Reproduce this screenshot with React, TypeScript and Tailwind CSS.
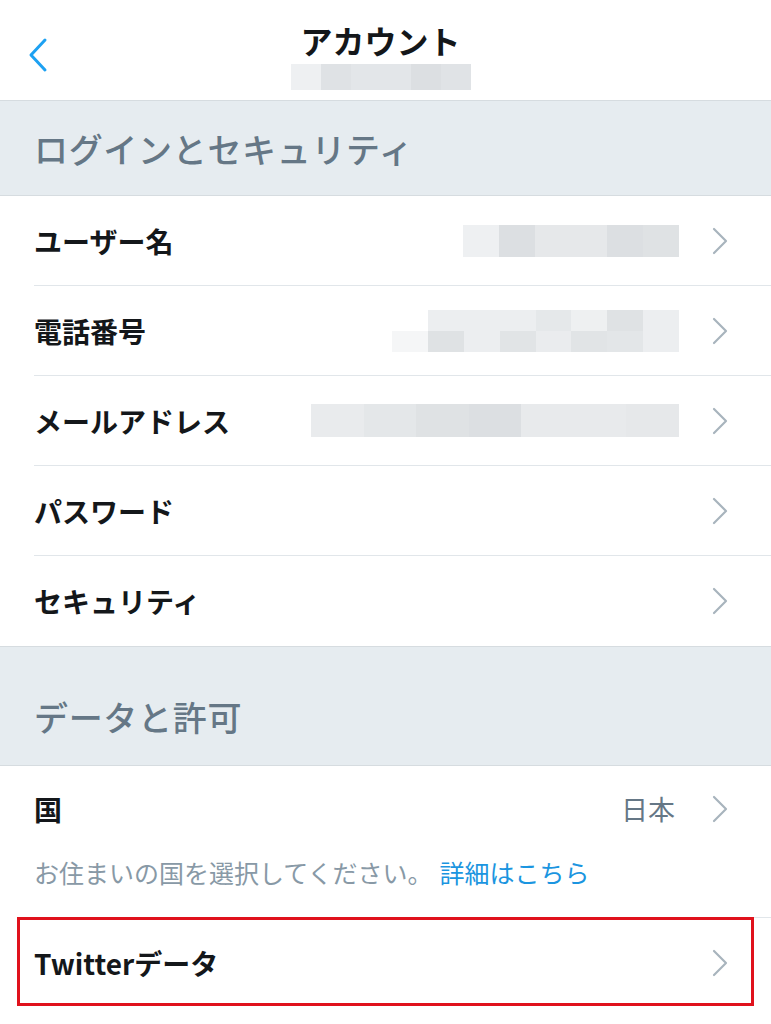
import React from 'react';

const font = "font-['Hiragino_Sans','Noto_Sans_CJK_JP',sans-serif]";

const Chevron: React.FC = () => (
  <svg width="18" height="30" viewBox="0 0 18 30" fill="none" className="shrink-0">
    <path d="M3 3 L15 15 L3 27" stroke="#a8b4bd" strokeWidth="2.2" strokeLinecap="round" strokeLinejoin="round" />
  </svg>
);

// pixelated placeholder for hidden values
const Blur: React.FC<{ cells: string[]; w: number; h: number; cells2?: string[] }> = ({ cells, w, h, cells2 }) => (
  <div className="flex flex-col" style={{ width: w }}>
    <div className="flex" style={{ height: h }}>
      {cells.map((c, i) => (
        <div key={i} className="flex-1" style={{ background: c }} />
      ))}
    </div>
    {cells2 && (
      <div className="flex" style={{ height: h }}>
        {cells2.map((c, i) => (
          <div key={i} className="flex-1" style={{ background: c }} />
        ))}
      </div>
    )}
  </div>
);

const Row: React.FC<{ label: string; right?: React.ReactNode; last?: boolean }> = ({ label, right, last }) => (
  <div className="pl-[34px]">
    <div className={`h-[90px] flex items-center pr-[42px] ${last ? '' : 'border-b border-[#e1e6ea]'}`}>
      <span className="text-[28px] font-bold text-[#14171a] flex-1">{label}</span>
      {right}
      <div className="ml-[32px]">
        <Chevron />
      </div>
    </div>
  </div>
);

const SectionHeader: React.FC<{ title: string; h: string; pt?: string }> = ({ title, h, pt = '' }) => (
  <div className={`${h} ${pt} bg-[#e6ecf0] flex items-center pl-[34px] border-b border-[#d6dce0]`}>
    <span className="text-[34px] font-medium text-[#657786] tracking-[0.02em]">{title}</span>
  </div>
);

const App: React.FC = () => {
  return (
    <div className={`w-[771px] h-[1024px] bg-white overflow-hidden ${font}`}>
      {/* Nav bar */}
      <div className="h-[101px] grid grid-cols-[100px_1fr_100px] border-b border-[#d6dce0]">
        <div className="flex items-center pl-[26px] pt-[10px]">
          <svg width="26" height="38" viewBox="0 0 26 38" fill="none">
            <path d="M19 4 L5 19 L19 34" stroke="#1da1f2" strokeWidth="3" strokeLinecap="round" strokeLinejoin="round" />
          </svg>
        </div>
        <div className="flex flex-col items-center pt-[20px] pr-[10px]">
          <span className="text-[32px] font-bold text-[#14171a] leading-[40px]">アカウント</span>
          <div className="mt-[4px]">
            <Blur w={180} h={26} cells={['#eef0f2', '#dfe2e5', '#e3e6e9', '#e3e6e9', '#dcdfe2', '#e0e3e6']} />
          </div>
        </div>
        <div />
      </div>

      <SectionHeader title="ログインとセキュリティ" h="h-[95px]" />

      <Row
        label="ユーザー名"
        right={<Blur w={216} h={32} cells={['#eef0f2', '#dcdfe2', '#e6e8ea', '#e6e8ea', '#dcdfe2', '#dfe2e4']} />}
      />
      <Row
        label="電話番号"
        right={
          <Blur
            w={287}
            h={21}
            cells={['#ffffff', '#eceef0', '#eceef0', '#eceef0', '#e5e8ea', '#eef0f1', '#dfe2e4', '#eceef0']}
            cells2={['#f5f6f7', '#dfe2e4', '#eceef0', '#e1e4e6', '#eaecee', '#e1e4e6', '#e3e6e8', '#eceef0']}
          />
        }
      />
      <Row
        label="メールアドレス"
        right={<Blur w={368} h={33} cells={['#e9ebed', '#e4e7e9', '#dfe2e4', '#dcdfe2', '#e8eaec', '#e8eaec', '#e6e8ea']} />}
      />
      <Row label="パスワード" />
      <Row label="セキュリティ" last />

      <div className="border-t border-[#d6dce0]">
        <SectionHeader title="データと許可" h="h-[119px]" pt="pt-[20px]" />
      </div>

      <div className="pl-[34px]">
        <div className="border-b border-[#e1e6ea]">
          <div className="h-[86px] flex items-center pr-[42px]">
            <span className="text-[28px] font-bold text-[#14171a] flex-1">国</span>
            <span className="text-[27px] text-[#657786]">日本</span>
            <div className="ml-[36px]">
              <Chevron />
            </div>
          </div>
          <div className="pb-[27px] pt-[2px] text-[25px] text-[#8899a6] leading-[36px]">
            お住まいの国を選択してください。
            <span className="text-[#1b95e0] ml-[7px]">詳細はこちら</span>
          </div>
        </div>
      </div>

      <div className="relative">
        <Row label="Twitterデータ" last />
        <div className="absolute left-[17px] top-[-1px] w-[737px] h-[89px] border-[3px] border-[#e0121c] pointer-events-none" />
      </div>
    </div>
  );
};

export default App;
